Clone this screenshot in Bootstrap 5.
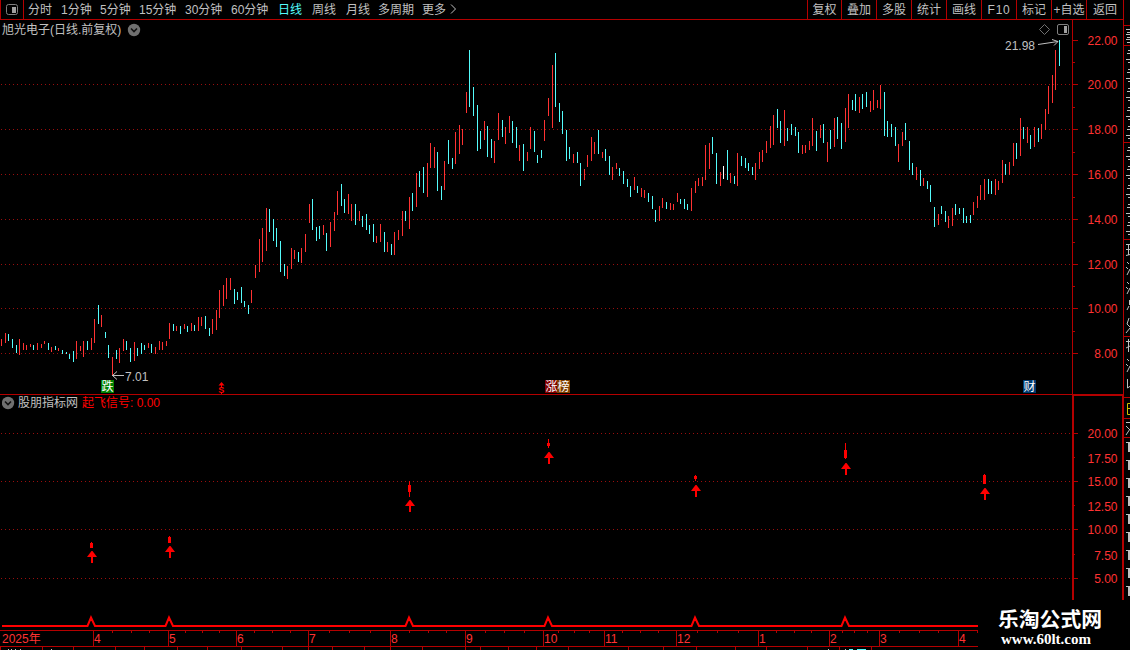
<!doctype html>
<html lang="zh-CN">
  <head>
    <meta charset="utf-8">
    <meta name="viewport" content="width=device-width, initial-scale=1">
    <title>旭光电子 日线</title>
    <link href="https://cdn.jsdelivr.net/npm/bootstrap@5.3.3/dist/css/bootstrap.min.css" rel="stylesheet">
    <style>
        body {
            width: 1130px;
            height: 650px;
            background-color: #000;
            color: #c0c0c0;
            font-family: "Liberation Sans", "Noto Sans CJK SC", sans-serif;
            font-size: 12px;
            line-height: 19px;
        }

        svg {
            display: block;
        }

        svg text {
            font-size: 12px;
        }

        .topbar {
            height: 20px;
            width: 1124px;
            border-bottom: 1px solid #b40000;
            border-right: 1px solid #b40000;
            line-height: 21px;
        }

        .layout-btn {
            width: 24px;
            border-left: 1px solid #b40000;
            border-right: 1px solid #b40000;
        }

        .period {
            color: #c0c0c0;
            text-decoration: none;
            white-space: nowrap;
        }

        .period.active {
            color: #54fcfc;
        }

        .tool {
            width: 35px;
            border-left: 1px solid #b40000;
            text-align: center;
            white-space: nowrap;
        }

        .pane-title {
            left: 2px;
            line-height: 16px;
            white-space: nowrap;
        }

        .price-title {
            padding-top: 2px;
        }

        .title-toggle {
            margin-left: 6px;
        }

        .side-strip {
            width: 7px;
            border-left: 1px solid #b40000;
        }
    </style>
  </head>
  <body class="overflow-hidden d-flex flex-column">
    <nav class="topbar d-flex flex-shrink-0">
      <div class="layout-btn d-flex align-items-center justify-content-center">
        <svg width="13" height="12" viewBox="0 0 13 12"><rect x="0.5" y="0.5" width="11" height="10" rx="2" fill="none" stroke="#808080"/><rect x="6" y="3" width="4" height="6" fill="#a0a0a0"/></svg>
      </div>
      <div class="d-flex flex-grow-1" id="periods"></div>
      <div class="d-flex" id="tools"></div>
    </nav>

    <main class="d-flex flex-grow-1 align-items-start">
      <div class="d-flex flex-column">
        <section class="position-relative">
          <div class="pane-title price-title position-absolute d-flex align-items-center top-0">
            <span>旭光电子(日线.前复权)</span>
            <svg class="title-toggle" width="14" height="14" viewBox="0 0 14 14"><circle cx="7" cy="7" r="6.2" fill="#707070"/><path d="M4 5.5 7 8.5 10 5.5" fill="none" stroke="#111" stroke-width="1.6"/></svg>
          </div>
          <svg id="priceChart" width="1123" height="375" viewBox="0 20 1123 375"></svg>
        </section>
        <section class="position-relative">
          <div class="pane-title position-absolute d-flex align-items-center top-0">
            <svg width="16" height="14" viewBox="0 0 16 14"><circle cx="6" cy="7" r="6.2" fill="#707070"/><path d="M3 5.5 6 8.5 9 5.5" fill="none" stroke="#111" stroke-width="1.6"/></svg>
            <span>股朋指标网</span>
            <span class="ms-1" style="color: #f00">起飞信号: 0.00</span>
          </div>
          <svg id="signalChart" width="1123" height="255" viewBox="0 395 1123 255"></svg>
        </section>
      </div>
      <aside class="side-strip overflow-hidden">
        <svg id="sideQuote" width="6" height="580" viewBox="1124 20 6 580"></svg>
      </aside>
    </main>

    <script src="https://cdn.jsdelivr.net/npm/bootstrap@5.3.3/dist/js/bootstrap.bundle.min.js"></script>
    <script>
      const periods = [
        ['分时', 33], ['1分钟', 39], ['5分钟', 39], ['15分钟', 46], ['30分钟', 46], ['60分钟', 47],
        ['日线', 34], ['周线', 34], ['月线', 32], ['多周期', 44], ['更多', 28]
      ];
      const tools = ['复权', '叠加', '多股', '统计', '画线', 'F10', '标记', '+自选', '返回'];

      document.getElementById('periods').innerHTML = periods.map(([name, w], i) =>
        `<a class="period ${name === '日线' ? 'active' : ''}" style="width:${w}px;${i ? '' : 'margin-left:4px;'}" href="#">${name}</a>`
      ).join('') + '<svg width="8" height="18" viewBox="0 0 8 18"><path d="M1 4.5 5.5 9 1 13.5" fill="none" stroke="#c0c0c0"/></svg>';
      document.getElementById('tools').innerHTML = tools.map((name, i) =>
        `<div class="tool" style="width:${i === 0 ? 34 : i === 8 ? 37 : 35}px;${name === 'F10' ? 'letter-spacing:.7px' : ''}">${name}</div>`
      ).join('');

      // x, high, low, colour (r = up, c = down, w = flat)
      const bars = `1 339 346 r,5 333 343 r,8 334 341 c,12 339 348 c,16 345 353 c,19 339 355 r,23 343 350 r,26 345 350 r,
        30 344 347 r,33 345 350 c,37 343 350 r,41 344 348 r,44 341 344 r,48 343 350 c,51 347 352 r,55 346 350 c,58 348 351 r,
        62 350 354 c,66 352 354 c,69 354 359 c,73 351 362 c,76 341 359 r,80 346 351 r,83 341 357 r,87 341 350 c,91 338 350 r,
        94 319 343 r,98 305 324 c,101 315 327 r,105 332 338 c,108 345 358 c,112 357 375 r,116 350 359 c,119 348 363 r,
        123 339 351 r,126 341 350 c,130 348 362 c,134 342 361 r,137 348 356 c,141 343 354 c,144 345 350 c,148 343 348 r,
        151 344 353 c,155 347 354 r,159 341 350 r,162 342 350 r,166 341 346 r,169 323 339 r,173 324 331 c,176 326 331 r,
        180 326 334 c,184 324 329 r,187 326 332 c,191 323 331 r,194 325 331 c,198 317 331 r,201 317 326 r,205 316 329 c,
        209 328 336 c,212 319 334 r,216 310 330 r,219 290 318 r,223 285 306 r,226 278 299 r,230 278 290 r,234 289 304 c,
        237 292 300 c,241 287 303 c,244 301 307 c,248 305 314 c,251 290 303 r,255 265 278 r,259 239 272 r,262 228 262 r,
        266 208 251 r,269 209 232 c,273 219 241 c,276 228 247 c,280 241 272 c,284 264 276 c,287 266 279 r,291 248 269 r,
        294 250 259 r,298 252 262 c,301 248 263 r,305 234 252 r,309 204 223 r,312 199 230 c,316 227 241 c,319 226 239 c,
        323 225 235 r,326 233 251 c,330 222 247 r,334 212 231 r,337 191 215 r,341 184 206 c,344 199 213 c,348 194 214 r,
        351 204 221 r,355 204 225 c,359 211 221 r,362 216 227 c,366 214 230 c,369 225 234 c,373 224 242 c,376 236 243 r,
        380 224 242 r,384 232 252 c,387 242 252 r,391 244 255 c,394 232 255 r,398 230 240 r,402 211 236 r,405 211 221 c,
        409 197 229 r,412 193 211 c,416 173 207 r,419 171 187 c,423 167 193 c,427 163 197 r,430 143 168 r,434 147 168 r,
        437 152 191 c,441 186 200 c,444 161 190 r,448 140 164 c,452 158 169 c,455 132 164 r,459 125 154 r,462 129 145 r,
        466 92 113 r,469 50 107 c,473 87 116 c,477 105 151 c,480 131 149 c,484 121 140 r,487 126 157 c,491 139 158 c,
        494 141 163 r,498 113 140 r,502 120 137 c,505 127 144 r,509 116 133 r,512 121 143 c,516 127 148 c,519 145 161 r,
        523 144 171 c,527 152 161 r,530 127 149 r,534 131 152 c,537 155 163 c,541 150 158 c,544 120 141 r,548 98 116 r,
        552 65 128 r,555 53 107 c,559 103 122 c,562 111 134 c,566 130 161 c,569 147 159 c,573 154 163 r,577 152 163 c,
        580 163 186 c,584 169 180 r,587 155 167 r,591 137 161 r,594 142 154 r,598 130 154 c,602 152 158 r,605 149 161 c,
        609 156 175 c,612 167 180 r,616 163 169 r,619 168 176 c,623 171 184 c,627 179 187 c,630 186 197 c,634 177 190 r,
        637 186 193 c,641 188 197 r,644 190 198 r,648 193 202 c,652 196 209 c,655 210 222 c,659 206 221 r,662 198 208 r,
        666 202 209 c,670 203 210 r,673 204 210 r,677 193 202 r,680 199 204 c,684 199 209 c,687 204 210 c,691 188 211 r,
        695 181 193 r,698 178 186 r,702 177 186 r,705 145 180 r,709 143 169 r,712 137 154 c,716 153 184 c,720 172 186 r,
        723 166 179 w,727 150 180 c,730 173 183 r,734 176 184 c,737 153 186 r,741 156 166 c,745 158 168 c,748 163 171 c,
        752 167 175 c,755 163 180 r,759 152 169 r,762 150 162 r,766 141 153 r,770 126 148 r,773 115 145 r,777 109 128 c,
        780 121 143 c,784 110 146 r,787 128 141 c,791 124 135 c,795 127 136 c,798 132 153 c,802 145 154 r,805 145 153 r,
        809 141 150 r,812 118 146 r,816 131 151 c,820 125 138 r,823 124 143 c,827 142 162 r,830 130 149 c,834 118 147 r,
        837 117 139 c,841 123 149 c,845 108 142 r,848 94 128 r,852 100 110 c,855 94 111 c,859 97 113 r,862 94 109 c,
        866 92 107 c,870 101 112 r,873 90 110 r,877 100 108 r,880 85 109 r,884 92 136 c,887 121 137 c,891 124 137 c,
        895 127 146 c,898 144 162 r,902 132 146 r,905 123 140 c,909 141 170 c,912 163 175 c,916 167 180 r,920 170 186 c,
        923 178 186 r,927 181 189 c,930 185 202 c,934 207 227 c,938 214 225 r,941 206 214 c,945 211 222 c,948 216 228 r,
        952 208 226 r,955 204 215 c,959 208 214 c,963 208 223 c,966 216 223 c,970 215 223 c,973 202 215 r,977 196 208 r,
        980 185 200 r,984 179 200 r,988 179 194 c,991 181 194 c,995 179 195 r,998 181 190 r,1002 160 183 r,1005 164 175 c,
        1009 162 175 r,1013 143 166 r,1016 143 159 c,1020 118 156 r,1023 127 139 c,1027 127 143 r,1030 135 149 c,
        1034 127 147 r,1038 128 142 c,1041 124 139 r,1045 109 130 r,1048 86 114 r,1052 75 103 r,1055 50 90 r,1059 40 66 c`
        .split(',').map(row => row.trim().split(' '));
      const colors = { r: '#ff3232', c: '#54fcfc', w: '#ffffff' };
      const line = '#b40000';

      const rect = (x, y, w, h, fill) => `<rect x="${x}" y="${y}" width="${w}" height="${h}" fill="${fill}"/>`;
      const text = (x, y, s, fill, extra = '') => `<text x="${x}" y="${y}" fill="${fill}" ${extra}>${s}</text>`;
      const grid = y => `<path d="M1 ${y + 0.5}H1071" stroke="#9a0e0e" stroke-dasharray="1 3"/>`;

      // price pane
      let price = [84, 129, 174, 219, 264, 308, 353].map(grid).join('');
      price += bars.map(([x, hi, lo, c]) => rect(x, hi, 1, lo - hi, colors[c])).join('');
      price += rect(1072, 20, 1, 375, line) + rect(0, 394, 1123, 1, line);
      [40, 84, 129, 174, 219, 264, 308, 353].forEach((y, i) => {
        price += rect(1073, y, 5, 1, line);
        price += text(1117.5, y + 5, (22 - i * 2).toFixed(2), '#ff3232', 'text-anchor="end"');
      });
      [62, 107, 152, 197, 242, 286, 331].forEach(y => price += rect(1073, y, 2, 1, line));
      price += text(1005, 50, '21.98', '#c0c0c0') + text(125, 381, '7.01', '#c0c0c0');
      price += '<path d="M1038 44.5 1058 41.5M1052 39.5 1058 41.5 1054 45.5M124 375.5H112M117 371.5 112.5 375.5 117 379.5" fill="none" stroke="#c0c0c0"/>';
      price += '<path d="M1044.5 24.5 1049.5 29.5 1044.5 34.5 1039.5 29.5Z" fill="none" stroke="#707070"/>';
      price += '<rect x="1057.5" y="24.5" width="11" height="10" rx="1.5" fill="none" stroke="#808080"/>' + rect(1064, 26, 3, 7, '#a0a0a0');
      [[101, '跌', '#008000'], [545, '涨', '#800000'], [557, '榜', '#804000'], [1023, '财', '#003a70']].forEach(([x, s, bg]) => {
        price += rect(x, 380, 13, 13, bg) + text(x + 0.5, 391, s, '#fff');
      });
      price += text(218.3, 393, 'S', '#f00', 'font-weight="bold" style="font-size:9px"');
      price += '<path d="M218.5 385.5 221.5 382 224.5 385.5Z" fill="#f00"/>' + rect(221, 385, 1, 2, '#f00') + rect(221, 392, 1, 2, '#f00');
      document.getElementById('priceChart').innerHTML = price;

      // signal pane
      let sig = [433, 481, 529, 578].map(grid).join('');
      sig += rect(1072, 395, 51, 1, line) + rect(1072, 395, 2, 205, line) + rect(1122, 395, 1, 205, line);
      [[433, '20.00'], [458, '17.50'], [481, '15.00'], [506, '12.50'], [529, '10.00'], [555, '7.50'], [578, '5.00']].forEach(([y, s], i) => {
        sig += rect(1074, i % 2 ? y - 1 : y, i % 2 ? 1 : 4, 1, line);
        sig += text(1117.5, y + 5, s, '#ff3232', 'text-anchor="end"');
      });
      // wick x, wick top, wick bottom, body top, body bottom, arrow tip
      [
        [91, 542, 548, 543, 548, 551], [169, 536, 543, 537, 543, 546], [409, 481, 497, 485, 492, 500],
        [548, 439, 448, 443, 446, 452], [695, 475, 481, 476, 479, 485], [845, 443, 459, 450, 458, 463],
        [984, 474, 484, 475, 484, 488]
      ].forEach(([x, t, b, bt, bb, tip]) => {
        sig += rect(x, t, 1, b - t, '#f00') + rect(x - 1, bt, 3, bb - bt, '#f00');
        sig += `<path d="M${x + 0.5} ${tip}h1L${x + 6} ${tip + 6}H${x - 4}Z" fill="#f00"/>` + rect(x, tip + 5, 2, 7, '#f00');
      });
      let trend = 'M2 626';
      [91, 169, 409, 548, 695, 845].forEach(x => trend += `H${x - 3.5}L${x} 617.5 ${x + 4} 626`);
      sig += `<path d="${trend}H978" fill="none" stroke="#f00" stroke-width="2"/>`;

      // date axis
      sig += rect(0, 630, 978, 1, line) + rect(0, 646, 978, 1, line);
      sig += text(2, 643, '2025年', '#ff3232');
      [[93, 4], [168, 5], [236, 6], [308, 7], [390, 8], [465, 9], [543, 10], [604, 11], [676, 12], [758, 1], [829, 2], [879, 3], [958, 4]].forEach(([x, m]) => {
        sig += rect(x, 630, 1, 16, line) + text(x + 1, 643, m, '#ff3232');
      });
      [112, 131, 149, 185, 202, 219, 254, 272, 290, 329, 349, 370, 409, 428, 446, 485, 504, 524, 558, 574, 589, 622, 640, 658,
        697, 717, 738, 776, 794, 811, 842, 854, 867, 899, 919, 938, 977].forEach(x => sig += rect(x, 631, 1, 2, line));
      [0, 42, 73, 115, 144, 177, 207, 241, 282, 308, 332, 364, 390, 422, 465, 480, 508, 536, 568, 628, 663, 696, 735, 766, 807,
        839, 871].forEach(x => sig += rect(x, 647, 1, 3, line));
      sig += [8, 11, 15, 20, 51, 828, 845].map(x => rect(x, 649, 1, 1, '#c0c0c0')).join('');
      sig += rect(849, 649, 4, 1, '#54fcfc') + rect(857, 649, 9, 1, '#54fcfc');

      // site mark
      sig += text(998, 627, '乐淘公式网', '#fff', 'font-weight="bold" style="font-size:20.8px"');
      sig += text(1001, 644, 'www.60lt.com', '#fff', 'font-family="Liberation Serif, serif" font-weight="bold" textLength="90" style="font-size:15px"');
      document.getElementById('signalChart').innerHTML = sig;

      // left edge of the quote panel
      let side = [25, 45, 142, 239, 336, 397, 418, 437].map(y => rect(1124, y, 6, 1, line)).join('');
      [29, 32, 34, 37, 39, 42].forEach((y, i) => side += rect(1126 + i % 2, y, 4, 1, '#c0c0c0'));
      [50, 69, 88, 107, 126, 147, 166, 185, 204, 222].forEach(y => {
        side += rect(1128, y, 2, 1, '#c0c0c0') + rect(1127, y + 3, 3, 1, '#c0c0c0');
        side += rect(1126, y + 9, 4, 1, '#c0c0c0') + rect(1128, y + 12, 2, 1, '#c0c0c0');
      });
      const strokes = [
        'M1126 244.5h4M1128.5 244v11M1126 249.5h4M1126 255.5l4-1', 'M1127 262l2 2M1126 267l2 2M1127 275l3-6',
        'M1127 282l2 2M1126 287l2 2M1127 294l3-6', 'M1129.5 300v5M1127 310l2-4', 'M1129 318l-2 6M1127 324l3 3M1126 333l4-5',
        'M1126 341.5h4M1128.5 339v13M1126 348l4-2', 'M1127 359l2 2M1126 364l2 2M1127 372l3-6', 'M1127.5 379v9l3-2',
        'M1126 422.5h4M1126 426l4 4M1130 429l-4 6'
      ];
      side += `<path d="${strokes.join('')}" fill="none" stroke="#c0c0c0"/>`;
      side += '<path d="M1130 403.5h-2.5v11H1130M1128 408.5h2" fill="none" stroke="#d0c000"/>';
      for (let y = 442; y < 590; y += 18) {
        side += rect(1126, y, 2, 1, '#c0c0c0') + rect(1128, y, 2, 10, '#c0c0c0');
      }
      document.getElementById('sideQuote').innerHTML = side;
    </script>
  </body>
</html>
